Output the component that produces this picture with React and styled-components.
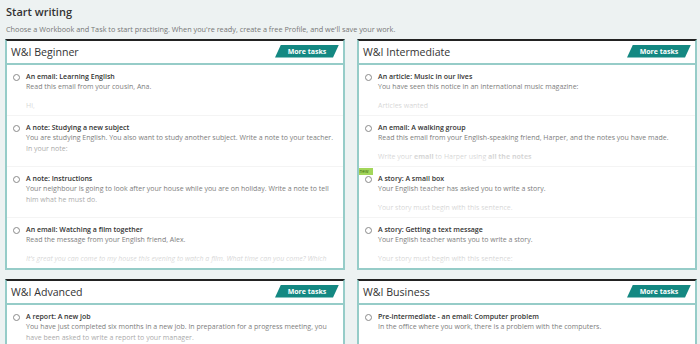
import React from "react"
import styled, { createGlobalStyle } from "styled-components"

const GlobalStyle = createGlobalStyle`
  html, body {
    margin: 0;
    padding: 0;
    background: #edf2f2;
    overflow: hidden;
  }
  body {
    font-family: "Open Sans", "Liberation Sans", sans-serif;
    color: #333;
  }
`

const teal = "#96ccc8"

const Page = styled.div`
  padding: 4px 3px 0 5px;
`

const Heading = styled.h1`
  margin: 0 0 4px 1px;
  font-size: 11px;
  line-height: 16px;
  font-weight: 600;
  color: #333;
`

const Intro = styled.p`
  margin: 0 0 5px 1px;
  font-size: 7.3px;
  line-height: 10px;
  color: #777;
`

const Grid = styled.div`
  display: grid;
  grid-template-columns: 340px 340px;
  column-gap: 12px;
  row-gap: 9px;
`

const Card = styled.section`
  background: #fff;
  border: 2px solid ${teal};
  border-top: 2px solid #222;
`

const CardHeader = styled.header`
  height: 22px;
  display: flex;
  align-items: center;
  justify-content: space-between;
  padding: 0 4px 0 4px;
  border-bottom: 2px solid ${teal};
`

const CardTitle = styled.h2`
  margin: 0;
  font-size: 10.6px;
  font-weight: 400;
  color: #333;
`

const MoreTasks = styled.a`
  display: flex;
  align-items: center;
  justify-content: center;
  width: 64px;
  height: 13px;
  margin-top: -2px;
  background: #148882;
  clip-path: polygon(6px 0, 100% 0, calc(100% - 6px) 100%, 0 100%);
  color: #fff;
  font-size: 7px;
  font-weight: 700;
  text-decoration: none;
`

const Body = styled.div`
  height: 203px;
  overflow: hidden;
`

const Item = styled.div`
  position: relative;
  border-bottom: 1px solid #f4f4f4;
`

const Clip = styled.div`
  position: relative;
  height: 50px;
  overflow: hidden;
  display: flex;
  gap: 6px;
  padding: 6px 7px 0 6px;
  box-sizing: border-box;

  &::after {
    content: "";
    position: absolute;
    left: 0;
    right: 0;
    bottom: 0;
    height: 30px;
    background: linear-gradient(rgba(255, 255, 255, 0), rgba(255, 255, 255, 0.88));
  }
`

const Radio = styled.span`
  flex: none;
  width: 5px;
  height: 5px;
  margin-top: 2.5px;
  border: 1px solid #8a8a8a;
  border-radius: 50%;
  background: #fff;
`

const Text = styled.div`
  flex: 1;
`

const TaskTitle = styled.div`
  font-size: 7px;
  line-height: 11px;
  font-weight: 600;
  color: #333;
`

const Desc = styled.p`
  margin: 0 0 8px;
  font-size: 7px;
  line-height: 10.5px;
  color: #777;
`

const Preview = styled.p`
  margin: 0;
  font-size: 7px;
  line-height: 10.5px;
  color: #999;
  font-style: ${(p) => (p.$italic ? "italic" : "normal")};

  b {
    font-weight: 700;
  }
`

const NewTag = styled.span`
  position: absolute;
  left: -4px;
  top: 1px;
  width: 18px;
  height: 7px;
  background: #a3d65a;
  color: #3b6b12;
  font-size: 4.5px;
  line-height: 7px;
  text-align: center;
  z-index: 2;
`

const workbooks = [
  {
    title: "W&I Beginner",
    tasks: [
      { title: "An email: Learning English", desc: "Read this email from your cousin, Ana.", preview: "Hi," },
      {
        title: "A note: Studying a new subject",
        desc: "You are studying English. You also want to study another subject. Write a note to your teacher. In your note:",
      },
      {
        title: "A note: Instructions",
        desc: "Your neighbour is going to look after your house while you are on holiday. Write a note to tell him what he must do.",
      },
      {
        title: "An email: Watching a film together",
        desc: "Read the message from your English friend, Alex.",
        preview:
          "It's great you can come to my house this evening to watch a film. What time can you come? Which",
        italic: true,
      },
    ],
  },
  {
    title: "W&I Intermediate",
    tasks: [
      {
        title: "An article: Music in our lives",
        desc: "You have seen this notice in an international music magazine:",
        preview: "Articles wanted",
      },
      {
        title: "An email: A walking group",
        desc: "Read this email from your English-speaking friend, Harper, and the notes you have made.",
        preview: (
          <>
            Write your <b>email</b> to Harper using <b>all the notes</b>
          </>
        ),
      },
      {
        title: "A story: A small box",
        desc: "Your English teacher has asked you to write a story.",
        preview: "Your story must begin with this sentence.",
        isNew: true,
      },
      {
        title: "A story: Getting a text message",
        desc: "Your English teacher wants you to write a story.",
        preview: "Your story must begin with this sentence:",
      },
    ],
  },
  {
    title: "W&I Advanced",
    tasks: [
      {
        title: "A report: A new job",
        desc: "You have just completed six months in a new job. In preparation for a progress meeting, you have been asked to write a report to your manager.",
      },
    ],
  },
  {
    title: "W&I Business",
    tasks: [
      {
        title: "Pre-intermediate - an email: Computer problem",
        desc: "In the office where you work, there is a problem with the computers.",
      },
    ],
  },
]

const Task = ({ task }) => (
  <Item>
    {task.isNew && <NewTag>new</NewTag>}
    <Clip>
      <Radio />
      <Text>
        <TaskTitle>{task.title}</TaskTitle>
        <Desc>{task.desc}</Desc>
        {task.preview && <Preview $italic={task.italic}>{task.preview}</Preview>}
      </Text>
    </Clip>
  </Item>
)

const App = () => (
  <>
    <GlobalStyle />
    <Page>
      <Heading>Start writing</Heading>
      <Intro>
        Choose a Workbook and Task to start practising. When you're ready, create a free Profile, and we'll save
        your work.
      </Intro>
      <Grid>
        {workbooks.map((wb) => (
          <Card key={wb.title}>
            <CardHeader>
              <CardTitle>{wb.title}</CardTitle>
              <MoreTasks href="#">More tasks</MoreTasks>
            </CardHeader>
            <Body>
              {wb.tasks.map((t) => (
                <Task key={t.title} task={t} />
              ))}
            </Body>
          </Card>
        ))}
      </Grid>
    </Page>
  </>
)

export default App
